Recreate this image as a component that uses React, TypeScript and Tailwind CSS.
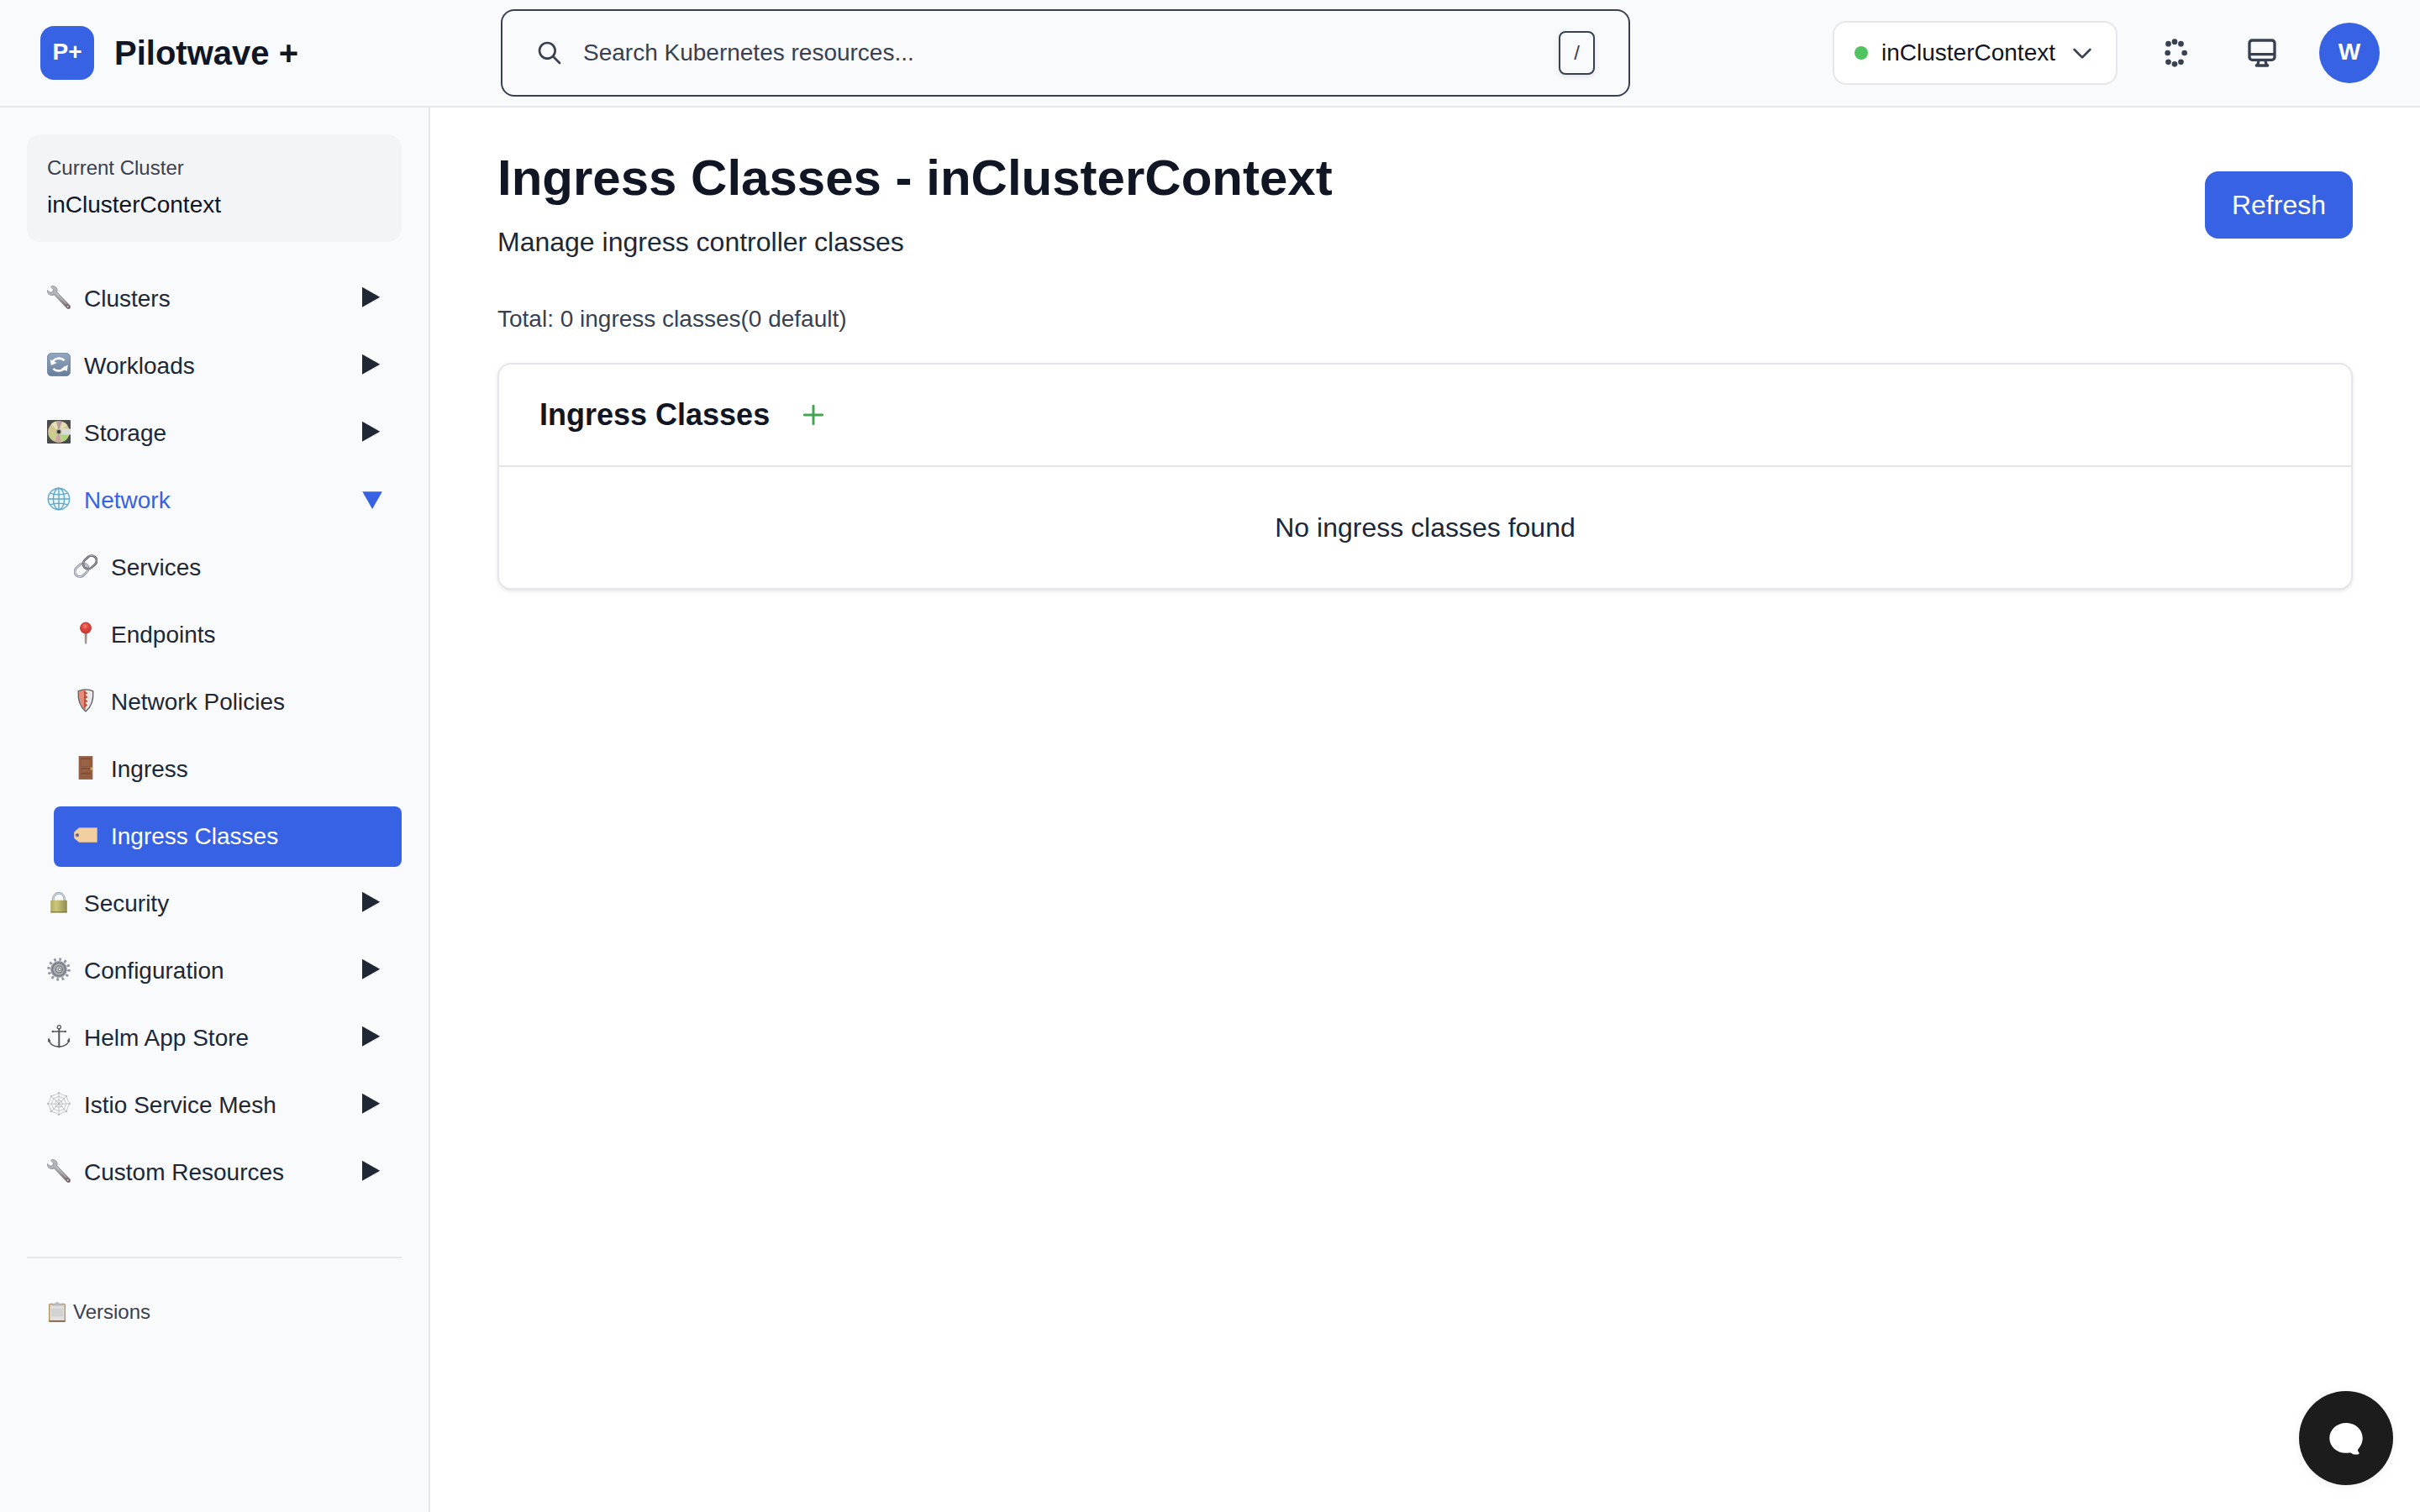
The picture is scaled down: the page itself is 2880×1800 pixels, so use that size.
import type { ReactNode } from "react";

function Glyph({ children }: { children: ReactNode }) {
  return (
    <svg viewBox="0 0 28 28" className="size-7 shrink-0" fill="none">
      {children}
    </svg>
  );
}

function WrenchGlyph({ id }: { id: string }) {
  return (
    <Glyph>
      <defs>
        <linearGradient id={id} x1="0" y1="0" x2="1" y2="1">
          <stop offset="0" stopColor="#c3c6cb" />
          <stop offset="0.5" stopColor="#a3a4a9" />
          <stop offset="1" stopColor="#70595a" />
        </linearGradient>
      </defs>
      <path
        d="M4.6 1.1C6.8-.2 10 .4 11.4 3c.8 1.5.8 3.2.3 4.700l15.200 15.800c1.200 1.300 1.200 2.600.3 3.600-1 1-2.500 1-3.600-.1L8.500 10.900C6.100 12 3.300 11.600 1.700 9.700.7 8.500.1 7 .4 5.500l3.400 2.700 2.800-.6.9-2.800z"
        fill={`url(#${id})`}
        stroke="#7b7d83"
        strokeWidth="0.7"
      />
      <path d="M10.500 8.500l12.500 13.300" stroke="#d0d1d5" strokeWidth="0.9" />
      <circle cx="24.800" cy="25" r="1.300" fill="#f3f4f6" stroke="#5c5356" strokeWidth="0.700" />
    </Glyph>
  );
}

function CycleGlyph() {
  return (
    <Glyph>
      <defs>
        <linearGradient id="cycle" x1="0" y1="0" x2="0" y2="1">
          <stop offset="0" stopColor="#93a7bf" />
          <stop offset="1" stopColor="#677f9c" />
        </linearGradient>
      </defs>
      <rect x="0.400" y="0.400" width="27.200" height="27.200" rx="5" fill="url(#cycle)" stroke="#5f7897" strokeWidth="0.800" />
      <path d="M6.400 11.600A8.400 7.600 0 0 1 20.600 9.200" stroke="#fff" strokeWidth="2.600" />
      <path d="M21.600 16.400A8.400 7.600 0 0 1 7.400 18.800" stroke="#fff" strokeWidth="2.600" />
      <path d="M3.800 8l1 7 6.800-3z" fill="#fff" />
      <path d="M24.800 14.200l-1 7.500-7-2.800z" fill="#fff" />
    </Glyph>
  );
}

function DiscGlyph() {
  return (
    <Glyph>
      <rect width="28" height="28" rx="1" fill="#4b4b4d" />
      <circle cx="14" cy="14" r="12.800" fill="#d2c894" />
      <path d="M14 14L5 5A12.800 12.800 0 0 1 11 1.600z" fill="#e6e2b6" />
      <path d="M14 14L11 1.600A12.800 12.800 0 0 1 18 1.900z" fill="#b99da0" />
      <path d="M14 14L18 1.900A12.800 12.800 0 0 1 24 6z" fill="#e3dfae" />
      <path d="M14 14L1.500 17A12.800 12.800 0 0 0 5 23z" fill="#c3d08c" />
      <path d="M14 14L9 25.800A12.800 12.800 0 0 0 17 26.400z" fill="#c6a9a2" />
      <path d="M14 14L20 25.300A12.800 12.800 0 0 0 25.500 19.500z" fill="#a8d67b" />
      <path d="M16 10.500h12v7H16z" fill="#dcdcdb" />
      <circle cx="14" cy="14" r="3.400" fill="#b5b09a" />
      <circle cx="14" cy="14" r="2.200" fill="#39393b" />
    </Glyph>
  );
}

function GlobeGlyph() {
  return (
    <Glyph>
      <circle cx="14" cy="14" r="12.700" fill="#eaf5fa" stroke="#69adc9" strokeWidth="1.500" />
      <g stroke="#61a8c6" strokeWidth="1.400">
        <ellipse cx="14" cy="14" rx="6.600" ry="12.700" />
        <path d="M14 1.300v25.400M1.300 14h25.400M3.600 7.200c6 2.200 14.800 2.200 20.800 0M3.600 20.800c6-2.200 14.800-2.200 20.800 0" />
      </g>
    </Glyph>
  );
}

function LinkGlyph() {
  return (
    <Glyph>
      <g transform="rotate(-43 14 14)">
        <rect x="-1.600" y="8" width="17.600" height="12" rx="6" stroke="#6e747e" strokeWidth="2.600" />
        <rect x="-1.600" y="8" width="17.600" height="12" rx="6" stroke="#dbe4ee" strokeWidth="1.200" />
        <rect x="12" y="8" width="17.600" height="12" rx="6" stroke="#504b50" strokeWidth="2.600" />
        <rect x="12" y="8" width="17.600" height="12" rx="6" stroke="#c9c8ce" strokeWidth="0.900" />
      </g>
    </Glyph>
  );
}

function PinGlyph() {
  return (
    <Glyph>
      <defs>
        <radialGradient id="pin" cx="0.450" cy="0.350" r="0.650">
          <stop offset="0" stopColor="#f08476" />
          <stop offset="0.450" stopColor="#d9443c" />
          <stop offset="1" stopColor="#c23a33" />
        </radialGradient>
      </defs>
      <path d="M12.800 13h2.600l-.5 13.200h-1.500z" fill="#a0948d" stroke="#8a7f79" strokeWidth="0.500" />
      <circle cx="14" cy="7.600" r="7" fill="url(#pin)" />
    </Glyph>
  );
}

function ShieldGlyph() {
  return (
    <Glyph>
      <path d="M14 .9c3.300 0 6.400.7 8.800 1.900.6 10-1.300 18.200-8.800 24.100C6.500 21 4.600 12.800 5.200 2.800 7.600 1.600 10.700.9 14 .9z" fill="#e9e9eb" />
      <path d="M14 1.500v24.500C7.500 20.500 5.700 12.500 6 3.500 8.200 2.200 11 1.500 14 1.500z" fill="#e58b7b" />
      <path d="M12 2l4.400 3.200-3 2.100 3.200 2.700-3.200 2.200 3.200 2.500-3.200 2.300 2.800 2.500-2.800 2.200 0 2-1.400-1.200z" fill="#bd5038" />
      <path d="M14 .9c3.300 0 6.400.7 8.800 1.900.6 10-1.300 18.200-8.800 24.100C6.500 21 4.600 12.800 5.200 2.800 7.600 1.600 10.700.9 14 .9z" stroke="#5d5c5e" strokeWidth="1.300" />
    </Glyph>
  );
}

function DoorGlyph() {
  return (
    <Glyph>
      <rect x="6" y="0.300" width="16" height="27.400" fill="#9a6244" stroke="#85533a" strokeWidth="0.600" />
      <g stroke="#6b3f2a" strokeWidth="1">
        <path d="M8 3.200h12M8 15h12M8 21h12" />
      </g>
      <path d="M8.300 4v8.500h11.400V4M8.300 16.500v2.500h11.400v-2.500M8.300 22.500v2.500h11.400v-2.500" stroke="#86533a" strokeWidth="0.700" />
      <rect x="19.800" y="13.500" width="2" height="3.200" rx="0.800" fill="#d9b84a" />
    </Glyph>
  );
}

function TagGlyph() {
  return (
    <Glyph>
      <path d="M6.200 5.500H27.600v17.200H6.200L.8 18.200Q.2 17.600.2 16.700V11.500q0-.9.600-1.500z" fill="#f1cfa0" stroke="#d7b78d" strokeWidth="0.500" />
      <circle cx="4" cy="14.200" r="1.700" fill="#4a63bd" stroke="#8f6e5a" strokeWidth="0.900" />
    </Glyph>
  );
}

function LockGlyph() {
  return (
    <Glyph>
      <defs>
        <linearGradient id="lock" x1="0" y1="0" x2="1" y2="0">
          <stop offset="0" stopColor="#b2ab62" />
          <stop offset="0.350" stopColor="#cdc67c" />
          <stop offset="1" stopColor="#918c4f" />
        </linearGradient>
      </defs>
      <path d="M7.300 12V10a6.700 6.700 0 0 1 13.400 0V12" stroke="#8797a6" strokeWidth="2.400" />
      <path d="M7.300 12V10a6.700 6.700 0 0 1 13.400 0V12" stroke="#ccd6df" strokeWidth="1.200" />
      <rect x="4.200" y="11.800" width="19.600" height="14.600" rx="0.600" fill="url(#lock)" />
      <path d="M4.200 25.800h19.600" stroke="#7d7640" strokeWidth="1.200" />
    </Glyph>
  );
}

function GearGlyph() {
  return (
    <Glyph>
      <circle cx="14" cy="14" r="12" stroke="#9093a0" strokeWidth="3.400" strokeDasharray="2.600 3.683" />
      <circle cx="14" cy="14" r="9.900" fill="#94979e" />
      <circle cx="14" cy="14" r="7.600" fill="#a9acb3" stroke="#74767c" strokeWidth="1.400" />
      <circle cx="14.500" cy="14" r="4" fill="#c9cdd3" stroke="#6a6c72" strokeWidth="1.100" />
      <circle cx="15" cy="14" r="1.800" fill="#f1f3f6" stroke="#55575c" strokeWidth="0.800" />
    </Glyph>
  );
}

function AnchorGlyph() {
  return (
    <Glyph>
      <g stroke="#55565a" strokeLinecap="round">
        <circle cx="14.300" cy="2.800" r="2.100" strokeWidth="1.300" />
        <path d="M14.300 5v21.500" strokeWidth="2" />
        <path d="M7 8h14.600" strokeWidth="1.300" />
        <path d="M2 17.500c.7 5 5 8.200 12.200 8.700 7.200-.5 11.500-3.700 12.200-8.700" strokeWidth="1.700" />
      </g>
      <path d="M.8 20.500l1-5.300 2.700 4.300zM27.400 20.500l-1-5.300-2.700 4.300z" fill="#55565a" />
      <circle cx="6.800" cy="8" r="1.200" fill="#55565a" />
      <circle cx="21.800" cy="8" r="1.200" fill="#55565a" />
    </Glyph>
  );
}

function WebGlyph() {
  return (
    <Glyph>
      <g stroke="#bcbdbe" strokeWidth="0.900">
        <path d="M14 .5v27M.5 14h27M4.500 4.500l19 19M23.500 4.500l-19 19" />
        <path d="M14 1q4.200 3 9.200 3.800 .8 5 3.800 9.200-3 4.200-3.800 9.200-5 .8-9.200 3.800-4.200-3-9.200-3.800-.8-5-3.800-9.200 3-4.200 3.800-9.200 5-.8 9.200-3.800z" />
        <path d="M14 5q2.900 2 6.400 2.600.6 3.500 2.600 6.400-2 2.900-2.600 6.400-3.500.6-6.400 2.600-2.900-2-6.400-2.600-.6-3.500-2.600-6.400 2-2.900 2.600-6.400 3.500-.6 6.400-2.600z" />
        <path d="M14 9.300q1.500 1.200 3.300 1.400.2 1.800 1.400 3.300-1.200 1.500-1.400 3.300-1.800.2-3.300 1.400-1.500-1.200-3.300-1.400-.2-1.800-1.400-3.300 1.200-1.500 1.400-3.300 1.800-.2 3.300-1.400z" />
      </g>
      <g fill="#b0b1b2">
        <circle cx="14" cy="1" r="0.900" />
        <circle cx="14" cy="27" r="0.900" />
        <circle cx="1" cy="14" r="0.900" />
        <circle cx="27" cy="14" r="0.900" />
        <circle cx="4.800" cy="4.800" r="0.900" />
        <circle cx="23.200" cy="4.800" r="0.900" />
        <circle cx="4.800" cy="23.200" r="0.900" />
        <circle cx="23.200" cy="23.200" r="0.900" />
        <circle cx="14" cy="14" r="1.200" />
      </g>
    </Glyph>
  );
}

function ClipboardGlyph() {
  return (
    <svg viewBox="0 0 24 24" className="size-6 shrink-0" fill="none">
      <rect x="2.700" y="2.400" width="18.600" height="20.400" rx="0.800" fill="#e2e1e0" stroke="#b8975e" strokeWidth="1.400" />
      <path d="M2.300 22.800h19.400" stroke="#6e5639" strokeWidth="1.500" />
      <path d="M5 7.500h14v10H5z" fill="#d4d3d3" />
      <path d="M4.500 4.500V2.800l5-.8C10.200.6 11 0 12 0s1.800.6 2.500 2l5 .8v1.700z" fill="#b9bbbf" />
    </svg>
  );
}

function Arrow({ open }: { open?: boolean }) {
  return (
    <svg viewBox="0 0 24 24" className="size-6 shrink-0" fill="currentColor">
      {open ? <path d="M.300 3.200h23.600L12.100 24z" /> : <path d="M0 -.3v24L21.200 11.700z" />}
    </svg>
  );
}

type Item = { label: string; icon: ReactNode; open?: boolean };

const before: Item[] = [
  { label: "Clusters", icon: <WrenchGlyph id="wrench-a" /> },
  { label: "Workloads", icon: <CycleGlyph /> },
  { label: "Storage", icon: <DiscGlyph /> },
  { label: "Network", icon: <GlobeGlyph />, open: true },
];

const children: Item[] = [
  { label: "Services", icon: <LinkGlyph /> },
  { label: "Endpoints", icon: <PinGlyph /> },
  { label: "Network Policies", icon: <ShieldGlyph /> },
  { label: "Ingress", icon: <DoorGlyph /> },
  { label: "Ingress Classes", icon: <TagGlyph />, open: true },
];

const after: Item[] = [
  { label: "Security", icon: <LockGlyph /> },
  { label: "Configuration", icon: <GearGlyph /> },
  { label: "Helm App Store", icon: <AnchorGlyph /> },
  { label: "Istio Service Mesh", icon: <WebGlyph /> },
  { label: "Custom Resources", icon: <WrenchGlyph id="wrench-b" /> },
];

function Group({ item }: { item: Item }) {
  return (
    <button
      className={
        item.open
          ? "flex h-[72px] w-full items-center px-6 text-[28px] leading-10 text-[#3762e3]"
          : "flex h-[72px] w-full items-center px-6 text-[28px] leading-10 text-[#202735]"
      }
    >
      <span className="mr-4 mb-1">{item.icon}</span>
      <span>{item.label}</span>
      <span className="mr-[-1px] mb-1 ml-auto">
        <Arrow open={item.open} />
      </span>
    </button>
  );
}

function Child({ item }: { item: Item }) {
  return (
    <a
      className={
        item.open
          ? "flex h-[72px] items-center rounded-lg bg-[#3762e3] px-6 text-[28px] leading-10 text-white"
          : "flex h-[72px] items-center rounded-lg px-6 text-[28px] leading-10 text-[#202735]"
      }
    >
      <span className="mr-4 mb-1">{item.icon}</span>
      <span>{item.label}</span>
    </a>
  );
}

function Header() {
  return (
    <header className="flex h-32 shrink-0 items-center border-b-2 border-[#e5e7ea] bg-[#f9fafc] px-12">
      <div className="flex w-[548px] items-center gap-6">
        <div className="flex size-16 items-center justify-center rounded-2xl bg-[#3762e3] pb-0.5 text-[28px] leading-10 font-bold text-white">P+</div>
        <span className="text-[40px] leading-[56px] font-bold text-[#111624]">Pilotwave +</span>
      </div>
      <div className="flex h-[104px] w-[1344px] items-center rounded-2xl border-2 border-[#394150] px-10 text-[#394150]">
        <svg viewBox="0 0 24 24" className="mr-6 size-8" fill="none" stroke="currentColor" strokeWidth="2" strokeLinecap="round" strokeLinejoin="round">
          <path d="M21 21l-6-6m2-5a7 7 0 11-14 0 7 7 0 0114 0z" />
        </svg>
        <span className="text-[28px] leading-10">Search Kubernetes resources...</span>
        <kbd className="ml-auto rounded-lg border-2 border-[#394150] bg-[#f9fafc] px-4 py-2 font-['Liberation_Sans',sans-serif] text-2xl leading-8 shadow-[0_2px_6px_rgba(0,0,0,0.1)]">/</kbd>
      </div>
      <div className="ml-auto flex items-center gap-8 text-[#394150]">
        <button className="flex h-[76px] items-center gap-4 rounded-2xl border-2 border-[#e5e7ea] bg-white px-6">
          <span className="size-4 rounded-full bg-[#50c55f]" />
          <span className="text-[28px] leading-10 text-[#111624]">inClusterContext</span>
          <svg viewBox="0 0 24 24" className="size-8" fill="none" stroke="currentColor" strokeWidth="2" strokeLinecap="round" strokeLinejoin="round">
            <path d="M19 9l-7 7-7-7" />
          </svg>
        </button>
        <button className="p-4">
          <svg viewBox="0 0 24 24" className="size-10" fill="currentColor">
            <circle cx="12" cy="4" r="2" />
            <circle cx="16.500" cy="5.500" r="2" />
            <circle cx="19" cy="12" r="2" />
            <circle cx="16.500" cy="18.500" r="2" />
            <circle cx="12" cy="20" r="2" />
            <circle cx="7.500" cy="18.500" r="2" />
            <circle cx="7" cy="12" r="2" />
            <circle cx="7.500" cy="5.500" r="2" />
          </svg>
        </button>
        <button className="p-4">
          <svg viewBox="0 0 24 24" className="size-10" fill="none" stroke="currentColor" strokeWidth="2" strokeLinecap="round" strokeLinejoin="round">
            <path d="M9.750 17L9 20l-1 1h8l-1-1-.75-3M3 13h18M5 17h14a2 2 0 002-2V5a2 2 0 00-2-2H5a2 2 0 00-2 2v10a2 2 0 002 2z" />
          </svg>
        </button>
        <div className="flex size-[72px] items-center justify-center rounded-full bg-[#3762e3] pb-0.5 text-[28px] leading-10 font-bold text-white">W</div>
      </div>
    </header>
  );
}

export default function App() {
  return (
    <div className="relative flex h-[1800px] w-[2880px] flex-col overflow-hidden bg-white font-['Liberation_Sans',Arial,sans-serif]">
      <Header />
      <div className="flex min-h-0 flex-1">
        <aside className="w-[512px] shrink-0 border-r-2 border-[#e5e7ea] bg-[#f9fafc] p-8">
          <div className="mb-8 rounded-2xl bg-[#f3f4f6] p-6">
            <p className="text-2xl leading-8 text-[#394150]">Current Cluster</p>
            <p className="mt-2 text-[28px] leading-10 text-[#111624]">inClusterContext</p>
          </div>
          <nav className="flex flex-col gap-2">
            {before.map((item) => (
              <Group key={item.label} item={item} />
            ))}
            <div className="ml-8 flex flex-col gap-2">
              {children.map((item) => (
                <Child key={item.label} item={item} />
              ))}
            </div>
            {after.map((item) => (
              <Group key={item.label} item={item} />
            ))}
          </nav>
          <div className="mt-16 border-t-2 border-[#e5e7ea] px-6 pt-12">
            <a className="flex items-center gap-[7px] text-2xl leading-8 text-[#394150]">
              <ClipboardGlyph />
              Versions
            </a>
          </div>
        </aside>
        <main className="flex-1 px-20 py-12">
          <div className="flex items-center justify-between">
            <div>
              <h1 className="text-6xl leading-[72px] font-bold text-[#111624]">Ingress Classes - inClusterContext</h1>
              <p className="mt-4 text-[32px] leading-[48px] text-[#202735]">Manage ingress controller classes</p>
            </div>
            <button className="h-20 rounded-2xl bg-[#3762e3] px-8 text-[32px] leading-[48px] text-white">Refresh</button>
          </div>
          <p className="mt-12 text-[28px] leading-10 text-[#394150]">Total: 0 ingress classes(0 default)</p>
          <section className="mt-8 rounded-2xl border-2 border-[#e5e6ea] bg-white shadow-[0_2px_6px_rgba(0,0,0,0.08),0_2px_4px_-2px_rgba(0,0,0,0.08)]">
            <div className="flex items-center gap-9 border-b-2 border-[#e5e6ea] px-12 py-8">
              <h2 className="text-4xl leading-[56px] font-bold text-[#111624]">Ingress Classes</h2>
              <svg viewBox="0 0 24 24" className="size-8 text-[#43a44f]" fill="none" stroke="currentColor" strokeWidth="2.2" strokeLinecap="round">
                <path d="M12 4v16m8-8H4" />
              </svg>
            </div>
            <p className="py-12 text-center text-[32px] leading-[48px] text-[#202735]">No ingress classes found</p>
          </section>
        </main>
      </div>
      <button className="absolute right-8 bottom-8 flex size-28 items-center justify-center rounded-full bg-[#1c1c1c] shadow-[0_2px_12px_rgba(0,0,0,0.06)]">
        <svg viewBox="0 0 40 38" className="mt-0.5 h-[38px] w-10" fill="#fff">
          <path d="M20 0C9 0 .300 8 .300 18S9 35.800 19.500 35.800c1.800 0 3.700-.5 5.500-.3 1.600.2 2.600 1.800 5 2h3.800c1.500 0 2.200-1 1.600-2.200-.7-1.300-1.600-1.800-1.400-3.300.2-1 1.800-2.200 3-4.500 1.500-2.600 2.700-5.800 2.700-9.500C39.700 8 31 0 20 0z" />
        </svg>
      </button>
    </div>
  );
}
